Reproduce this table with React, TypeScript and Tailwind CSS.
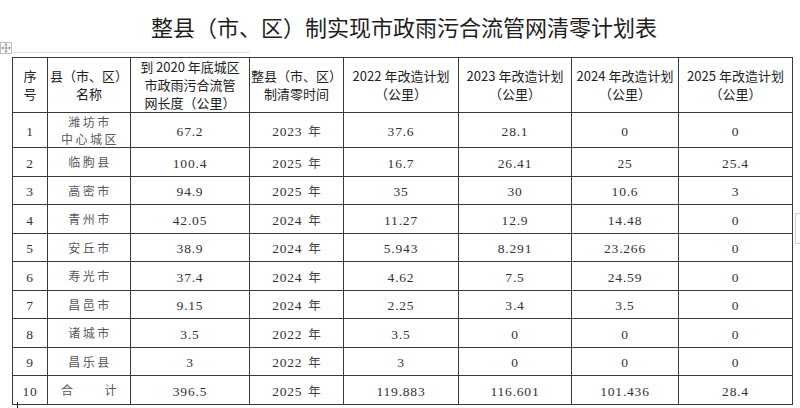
import { Move } from "lucide-react";

type Row = {
  no: string;
  name: string[];
  len: string;
  year: string;
  p22: string;
  p23: string;
  p24: string;
  p25: string;
};

const ROWS: Row[] = [
  { no: "1", name: ["潍坊市", "中心城区"], len: "67.2", year: "2023", p22: "37.6", p23: "28.1", p24: "0", p25: "0" },
  { no: "2", name: ["临朐县"], len: "100.4", year: "2025", p22: "16.7", p23: "26.41", p24: "25", p25: "25.4" },
  { no: "3", name: ["高密市"], len: "94.9", year: "2025", p22: "35", p23: "30", p24: "10.6", p25: "3" },
  { no: "4", name: ["青州市"], len: "42.05", year: "2024", p22: "11.27", p23: "12.9", p24: "14.48", p25: "0" },
  { no: "5", name: ["安丘市"], len: "38.9", year: "2024", p22: "5.943", p23: "8.291", p24: "23.266", p25: "0" },
  { no: "6", name: ["寿光市"], len: "37.4", year: "2024", p22: "4.62", p23: "7.5", p24: "24.59", p25: "0" },
  { no: "7", name: ["昌邑市"], len: "9.15", year: "2024", p22: "2.25", p23: "3.4", p24: "3.5", p25: "0" },
  { no: "8", name: ["诸城市"], len: "3.5", year: "2022", p22: "3.5", p23: "0", p24: "0", p25: "0" },
  { no: "9", name: ["昌乐县"], len: "3", year: "2022", p22: "3", p23: "0", p24: "0", p25: "0" },
  { no: "10", name: ["合　　计"], len: "396.5", year: "2025", p22: "119.883", p23: "116.601", p24: "101.436", p25: "28.4" },
];

const HEAD: string[][] = [
  ["序", "号"],
  ["县（市、区）", "名称"],
  ["到 2020 年底城区", "市政雨污合流管", "网长度（公里）"],
  ["整县（市、区）", "制清零时间"],
  ["2022 年改造计划", "（公里）"],
  ["2023 年改造计划", "（公里）"],
  ["2024 年改造计划", "（公里）"],
  ["2025 年改造计划", "（公里）"],
];

const cjk = "font-['Noto_Sans_CJK_SC',sans-serif]";
const num = "font-['Liberation_Serif','Noto_Sans_CJK_SC',serif] text-[13.5px] tracking-[0.8px] text-[#333]";
const cell = "border border-[#3a3a3a] p-0 text-center align-middle";

function Num({ v }: { v: string }) {
  return <span className={num}>{v}</span>;
}

export default function App() {
  return (
    <div className="relative h-[408px] w-[800px] overflow-hidden bg-white">
      <div
        className={`flex h-[52px] items-center justify-center pl-[8px] text-[22px] text-[#1e1e1e] ${cjk}`}
      >
        整县（市、区）制实现市政雨污合流管网清零计划表
      </div>
      <div className="ml-[12px] h-[5px] w-[238px] border-t border-[#e4e4e4]" />

      <table className="ml-[12px] w-[780px] table-fixed border-collapse">
        <colgroup>
          <col className="w-[35px]" />
          <col className="w-[83px]" />
          <col className="w-[119px]" />
          <col className="w-[94px]" />
          <col className="w-[115px]" />
          <col className="w-[113px]" />
          <col className="w-[107px]" />
          <col className="w-[114px]" />
        </colgroup>
        <thead>
          <tr className="h-[55px]">
            {HEAD.map((lines, i) => (
              <th
                key={i}
                className={`${cell} text-[13px] font-normal leading-[18px] text-[#222] ${cjk}`}
              >
                {lines.map((l, j) => (
                  <div key={j} className="whitespace-nowrap">
                    {l}
                  </div>
                ))}
              </th>
            ))}
          </tr>
        </thead>
        <tbody>
          {ROWS.map((r, i) => (
            <tr key={r.no} className={i === 0 ? "h-[34px]" : "h-[28.5px]"}>
              <td className={cell}>
                <Num v={r.no} />
              </td>
              <td className={`${cell} text-[12px] leading-[17px] tracking-[2.5px] text-[#5a5a5a] ${cjk}`}>
                {r.name.map((n) => (
                  <div key={n} className="whitespace-nowrap pl-[2px]">
                    {n}
                  </div>
                ))}
              </td>
              <td className={cell}>
                <Num v={r.len} />
              </td>
              <td className={cell}>
                <Num v={r.year} />
                <span className={`ml-[6px] text-[12.5px] text-[#444] ${cjk}`}>年</span>
              </td>
              <td className={cell}>
                <Num v={r.p22} />
              </td>
              <td className={cell}>
                <Num v={r.p23} />
              </td>
              <td className={cell}>
                <Num v={r.p24} />
              </td>
              <td className={cell}>
                <Num v={r.p25} />
              </td>
            </tr>
          ))}
        </tbody>
      </table>

      {/* table move handle */}
      <div className="absolute left-0 top-[42px] flex size-[12px] items-center justify-center border border-[#bdbdbd] bg-white">
        <Move size={10} strokeWidth={1.5} className="text-[#666]" aria-hidden />
      </div>
      {/* resize handle on the right edge */}
      <div className="absolute left-[795px] top-[213px] h-[31px] w-[6px] border-y border-l border-[#cfcfcf]" />
      {/* caret below table */}
      <div className="absolute left-[17px] top-[402px] h-[6px] w-px bg-[#222]" />
    </div>
  );
}
